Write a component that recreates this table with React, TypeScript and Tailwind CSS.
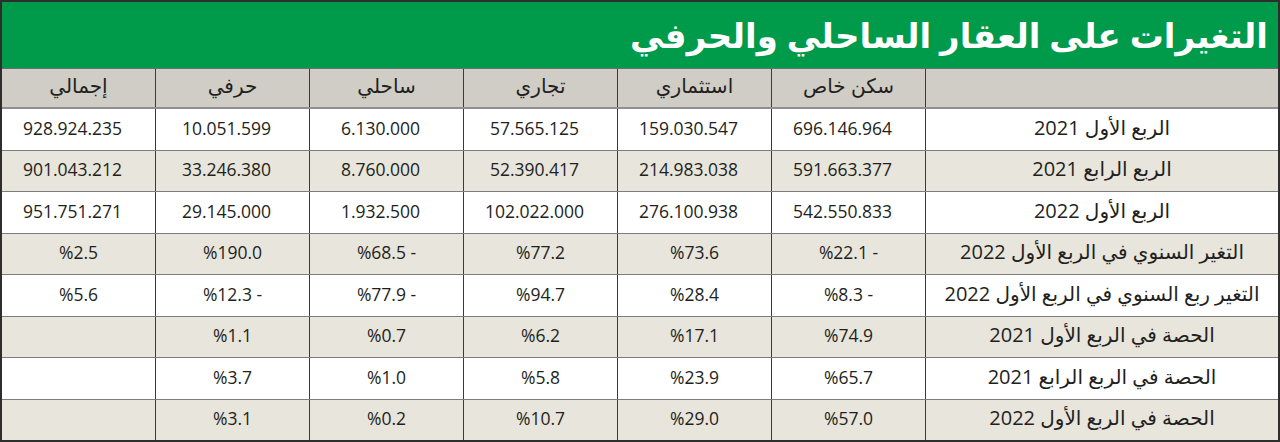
import React from "react";

const headers = ["سكن خاص", "استثماري", "تجاري", "ساحلي", "حرفي", "إجمالي"];

const rows: { label: string; values: string[] }[] = [
  { label: "الربع الأول 2021", values: ["696.146.964", "159.030.547", "57.565.125", "6.130.000", "10.051.599", "928.924.235"] },
  { label: "الربع الرابع 2021", values: ["591.663.377", "214.983.038", "52.390.417", "8.760.000", "33.246.380", "901.043.212"] },
  { label: "الربع الأول 2022", values: ["542.550.833", "276.100.938", "102.022.000", "1.932.500", "29.145.000", "951.751.271"] },
  { label: "التغير السنوي في الربع الأول 2022", values: ["%22.1 -", "%73.6", "%77.2", "%68.5 -", "%190.0", "%2.5"] },
  { label: "التغير ربع السنوي في الربع الأول 2022", values: ["%8.3 -", "%28.4", "%94.7", "%77.9 -", "%12.3 -", "%5.6"] },
  { label: "الحصة في الربع الأول 2021", values: ["%74.9", "%17.1", "%6.2", "%0.7", "%1.1", ""] },
  { label: "الحصة في الربع الرابع 2021", values: ["%65.7", "%23.9", "%5.8", "%1.0", "%3.7", ""] },
  { label: "الحصة في الربع الأول 2022", values: ["%57.0", "%29.0", "%10.7", "%0.2", "%3.1", ""] },
];

function Cell({ children, last, shift }: { children?: React.ReactNode; last?: boolean; shift?: boolean }) {
  return (
    <div
      className={`flex items-center justify-center ${shift ? "pr-[12px]" : ""} ${
        last ? "w-[153px]" : "w-[154px] border-l border-[#3a3a3a]"
      }`}
    >
      {children}
    </div>
  );
}

export default function App() {
  return (
    <div
      dir="rtl"
      className="w-[1280px] h-[442px] border-2 border-[#2e2e2e] flex flex-col text-[#231f20] overflow-hidden"
      style={{ fontFamily: '"Open Sans", "DejaVu Sans", sans-serif' }}
    >
      {/* Title bar */}
      <div className="h-[66px] bg-[#009a4b] flex items-center pr-[10px]">
        <h1 className="text-white font-bold text-[34px] leading-none tracking-tight">
          التغيرات على العقار الساحلي والحرفي
        </h1>
      </div>

      {/* Column headers */}
      <div className="h-[41px] flex bg-[#cfcdc6] border-t border-[#6f6f6f] border-b-[2px] border-b-[#8f8f8f] text-[20px]">
        <div className="flex-1 border-l border-[#3a3a3a]" />
        {headers.map((h, i) => (
          <Cell key={h} last={i === headers.length - 1}>
            <span className="-mt-[4px]">{h}</span>
          </Cell>
        ))}
      </div>

      {/* Body */}
      <div className="flex-1 flex flex-col">
        {rows.map((row, r) => (
          <div
            key={row.label}
            className={`flex-1 flex text-[17.5px] ${
              r % 2 === 1 ? "bg-[#e8e5dc]" : "bg-white"
            } ${r < rows.length - 1 ? "border-b border-[#7d7d7d]" : ""}`}
          >
            <div className="flex-1 flex items-center justify-center border-l border-[#3a3a3a]">
              <span className="text-[20px] -mt-[3px]">{row.label}</span>
            </div>
            {row.values.map((v, i) => (
              <Cell key={i} last={i === row.values.length - 1} shift={r < 3}>
                <span dir="ltr" className="-mt-[3px]">{v}</span>
              </Cell>
            ))}
          </div>
        ))}
      </div>
    </div>
  );
}
